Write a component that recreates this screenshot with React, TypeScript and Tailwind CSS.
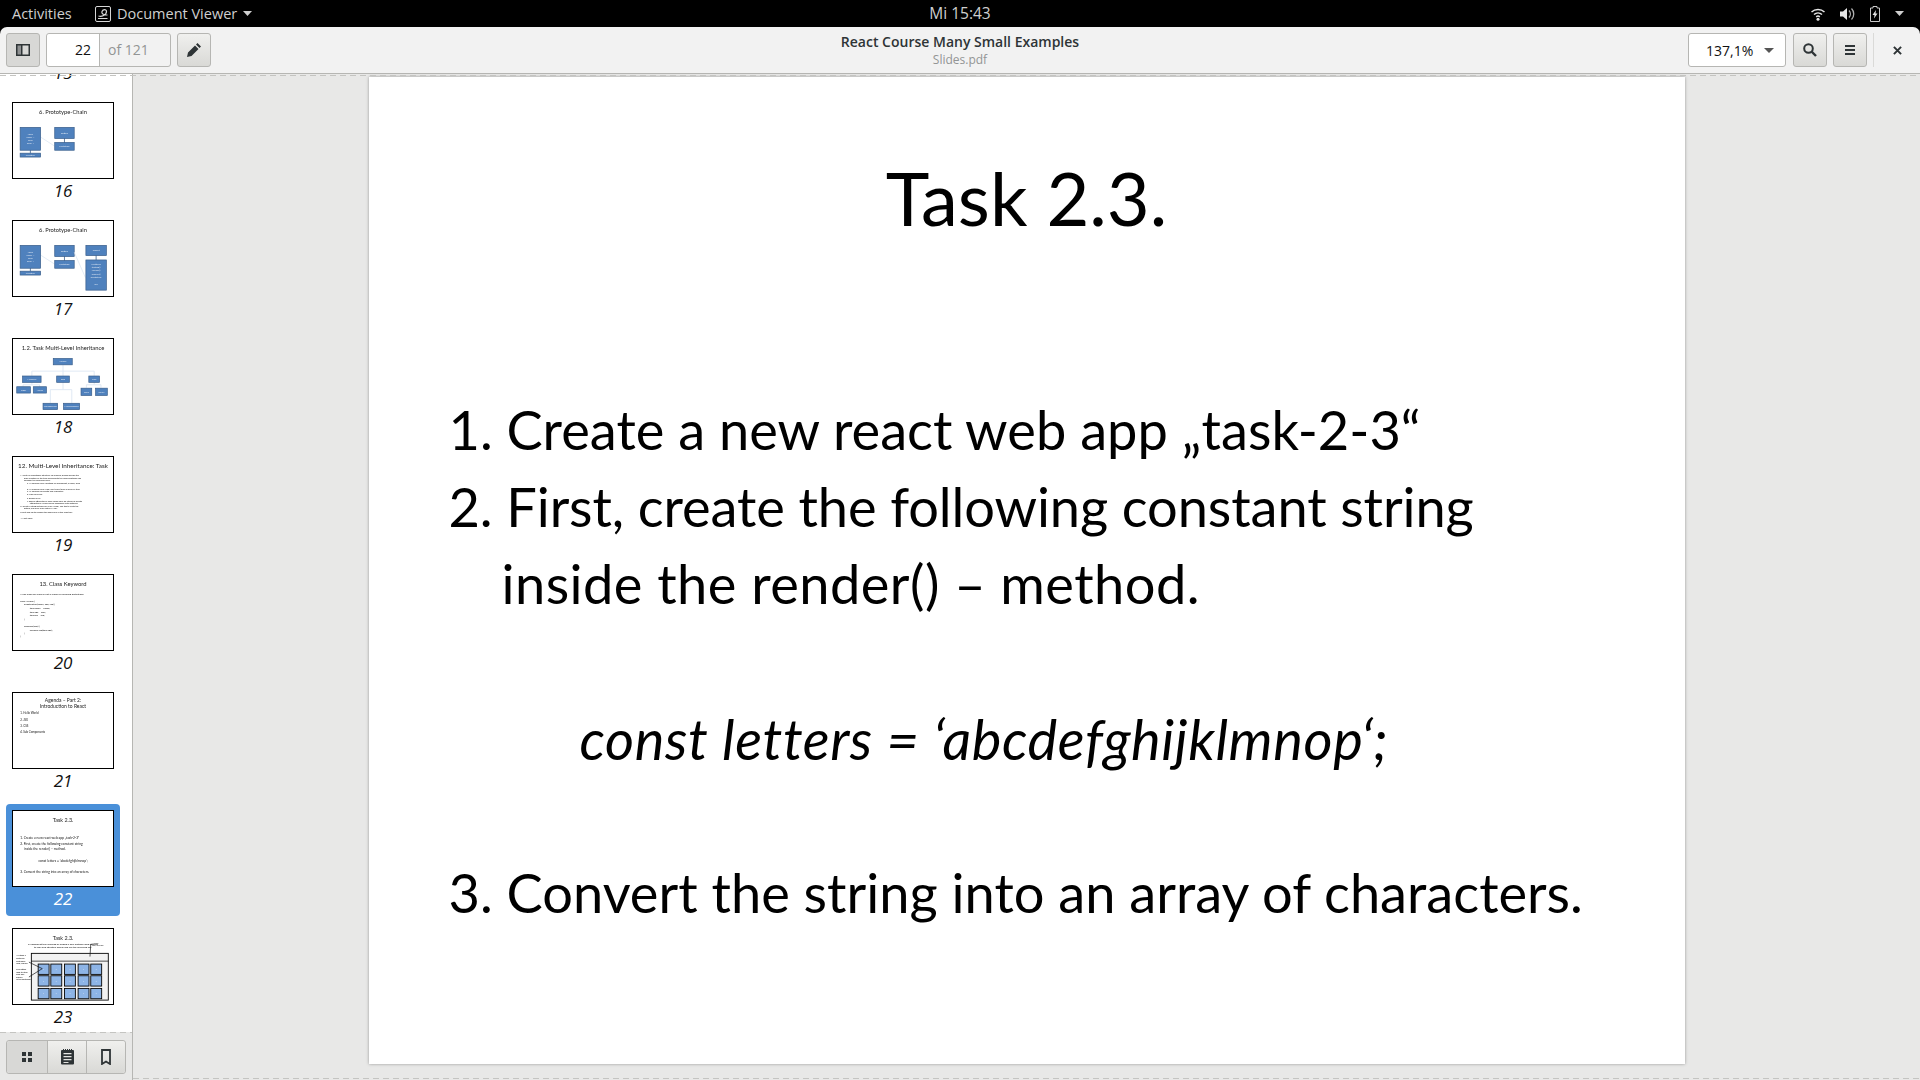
import type { ReactNode } from 'react'

const BOX = '#4f81bd'
const BOX_EDGE = '#385d8a'

type Rect = [number, number, number, number, string?]

function Boxes({ items }: { items: Rect[] }) {
  return (
    <>
      {items.map(([x, y, x2, y2, label], i) => (
        <g key={i}>
          <rect x={x} y={y} width={x2 - x} height={y2 - y} fill={BOX} stroke={BOX_EDGE} strokeWidth="0.7" />
          {label && (
            <text x={(x + x2) / 2} y={(y + y2) / 2 + 0.8} fontSize="2.4" fill="#dfe8f4" textAnchor="middle">
              {label}
            </text>
          )}
        </g>
      ))}
    </>
  )
}

function Line({ x, y, size = 2.6, anchor, children, color = '#111' }: { x: number; y: number; size?: number; anchor?: 'middle'; children: ReactNode; color?: string }) {
  return (
    <text x={x} y={y} fontSize={size} fill={color} textAnchor={anchor}>
      {children}
    </text>
  )
}

function Title({ y = 11.5, size = 5.9, children }: { y?: number; size?: number; children: ReactNode }) {
  return <Line x={51} y={y} size={size} anchor="middle" color="#222">{children}</Line>
}

function Chain({ extended }: { extended?: boolean }) {
  return (
    <>
      <Title>6. Prototype-Chain</Title>
      <path d="M28 35 L42 44" stroke="#dce6f2" strokeWidth="0.8" />
      <path d="M17.5 48 V52 M52.5 36 V41" stroke={BOX_EDGE} strokeWidth="0.8" />
      <Boxes items={[[7, 25, 28, 48.5], [7, 51.5, 28, 55.5, 'Function'], [42.5, 25, 62.5, 36.5, 'Button'], [42.5, 40.5, 62.5, 48.5, 'Prototype']]} />
      <text x="17.5" y="33" fontSize="2.2" fill="#dfe8f4" textAnchor="middle">Apple</text>
      <text x="17.5" y="36" fontSize="2.2" fill="#dfe8f4" textAnchor="middle">name: ...</text>
      <text x="17.5" y="39" fontSize="2.2" fill="#dfe8f4" textAnchor="middle">color</text>
      <text x="17.5" y="42" fontSize="2.2" fill="#dfe8f4" textAnchor="middle">price: 1</text>
      {extended && (
        <>
          <path d="M62.5 32 L74 58" stroke="#dce6f2" strokeWidth="0.8" />
          <path d="M85 35 V41" stroke={BOX_EDGE} strokeWidth="0.8" />
          <Boxes items={[[74.5, 25, 95.5, 35.5, 'Object'], [74.5, 40, 95.5, 71]]} />
          {['Prototype', 'toString()', 'valueOf()', 'hasOwn()', 'isPrototype', '', 'null'].map((t, i) => (
            <text key={i} x="85" y={45 + i * 3.4} fontSize="2.2" fill="#dfe8f4" textAnchor="middle">{t}</text>
          ))}
        </>
      )}
    </>
  )
}

function Tree() {
  return (
    <>
      <Title size={6}>1.2. Task Multi-Level Inheritance</Title>
      <path d="M51 26 V38 M19 38 V33 H83 V38 M19 44 V47 H10 V49 M19 47 H27 V49 M51 44 V52 H38 V66 M51 52 H60 V66 M83 44 V47 H75 V50 M83 47 H90 V50" stroke="#dce6f2" strokeWidth="0.9" fill="none" />
      <Boxes
        items={[
          [41, 20, 60.5, 26.5, 'Animal'],
          [9.5, 38, 28.5, 44.5, 'Mammal'],
          [44.5, 38, 57.5, 44.5, 'Bird'],
          [77.5, 38, 88.5, 44.5, 'Fish'],
          [3.5, 49, 17.5, 55.5, 'Tiger'],
          [20.5, 49, 34, 55.5, 'Horse'],
          [69.5, 50.5, 80.5, 58, 'Tuna'],
          [84.5, 50.5, 96.5, 58, 'Shark'],
          [30.5, 66, 45.5, 72.5, 'Woodpecker'],
          [51.5, 66, 68, 72.5, 'Hummingbird'],
        ]}
      />
    </>
  )
}

const TASK_LINES: [number, number, string][] = [
  [7, 20, '1.  Write an inheritance structure for animals, please include the'],
  [11, 22.3, 'base function of the tree according to the following tasks and'],
  [11, 24.7, 'consider the following rules:'],
  [14, 28.2, 'a.  All animals have a method for movement, a name, food'],
  [14, 33.7, 'b.  All animals have a age, sub-types (such as how far they'],
  [14, 36.4, 'c.  All animals can breath and reproduce'],
  [14, 39, 'd.  Fish can swim'],
  [14, 42.7, 'e.  Birds can fly'],
  [14, 46, 'f.   Special attributes of each animal shall be stored as private'],
  [17, 48.2, 'attributes in a class and be accessible with methods'],
  [7, 51.2, '2.  Create a string method for every "class", use this to write the'],
  [11, 53.5, 'details, and have each return a "log"'],
  [7, 58, '3.  Test and log to console the behaviour of the class tree -'],
  [7, 63.4, '4.  Next video'],
]

const CODE_LINES: [number, number, string][] = [
  [7, 20.4, '•   The class keyword is just a sugar for defining prototypes'],
  [7, 28, 'class Animal {'],
  [11, 31, 'constructor(name, age, job) {'],
  [17, 35, 'this.name = name;'],
  [17, 38.7, 'this.age = age;'],
  [17, 42.4, 'this.job = job;'],
  [11, 46, '}'],
  [11, 53.4, 'describe(age) {'],
  [17, 57, 'console.log(this.age);'],
  [11, 60.7, '}'],
  [7, 64, '}'],
]

function Grid() {
  const xs = [25.5, 38.5, 52.5, 66.5, 79.5]
  const ys = [36, 48, 61]
  return (
    <>
      <Title size={5.6}>Task 2.3.</Title>
      <Line x={51} y={16.5} size={2.5} anchor="middle" color="#000">3. Implement the following by adding a new method using Flexbox</Line>
      <Line x={51} y={19.2} size={2.5} anchor="middle" color="#000">to look and structure similar and use the following key:</Line>
      <rect x="18.5" y="25" width="79" height="48" fill="#f2f2f2" stroke="#000" strokeWidth="0.9" />
      <path d="M18.5 33 H97.5" stroke="#000" strokeWidth="0.7" />
      {ys.map(y =>
        xs.map(x => (
          <g key={`${x}-${y}`}>
            <rect x={x} y={y} width="11.2" height="10.6" fill="#8db4e6" stroke="#000" strokeWidth="0.9" />
            <text x={x + 5.6} y={y + 6} fontSize="2" fill="#dfe8f4" textAnchor="middle">a</text>
          </g>
        )),
      )}
      <path d="M16 34 L29.7 40.7 L16 49.3 M78.7 28.3 L79.5 15.7 H81" stroke="#111" strokeWidth="0.7" fill="none" />
      <Line x={81} y={15.5} size={2}>Header</Line>
      <Line x={81} y={17.6} size={2}>title, one row</Line>
      {['All items a', 'centered', 'container:', 'Grid, Square'].map((t, i) => (
        <Line key={t} x={3} y={28 + i * 2.7} size={2.2} color="#000">{t}</Line>
      ))}
      {['The letters', 'map to item', 'blue box', 'shown', 'in the container'].map((t, i) => (
        <Line key={t} x={3} y={42 + i * 2.7} size={2.2} color="#000">{t}</Line>
      ))}
    </>
  )
}

const THUMBS: { page: number; body?: ReactNode; active?: boolean }[] = [
  { page: 15 },
  { page: 16, body: <Chain /> },
  { page: 17, body: <Chain extended /> },
  { page: 18, body: <Tree /> },
  {
    page: 19,
    body: (
      <>
        <Title y={11.5} size={6.5}>12. Multi-Level Inheritance: Task</Title>
        {TASK_LINES.map(([x, y, t]) => <Line key={y} x={x} y={y} size={2.2}>{t}</Line>)}
      </>
    ),
  },
  {
    page: 20,
    body: (
      <>
        <Title y={11.5} size={6}>13. Class Keyword</Title>
        {CODE_LINES.map(([x, y, t]) => <Line key={y} x={x} y={y} size={2.6}>{t}</Line>)}
      </>
    ),
  },
  {
    page: 21,
    body: (
      <>
        <Title y={8.8} size={5.1}>Agenda – Part 2:</Title>
        <Title y={15} size={5.1}>Introduction to React</Title>
        {['1.   Hello World', '2.   JSX', '3.   CSS', '4.   Sub Components'].map((t, i) => (
          <Line key={t} x={7} y={22 + i * 6.3} size={3}>{t}</Line>
        ))}
      </>
    ),
  },
  {
    page: 22,
    active: true,
    body: (
      <>
        <Title y={11.5} size={5.6}>Task 2.3.</Title>
        <Line x={7} y={28.5} size={3.4}>1. Create a new react web app „task-2-3“</Line>
        <Line x={7} y={34.8} size={3.4}>2. First, create the following constant string</Line>
        <Line x={11} y={40.2} size={3.4}>inside the render() – method.</Line>
        <Line x={51} y={52.4} size={3.4} anchor="middle">const letters = ‘abcdefghijklmnop‘;</Line>
        <Line x={7} y={63.4} size={3.4}>3. Convert the string into an array of characters.</Line>
      </>
    ),
  },
  { page: 23, body: <Grid /> },
]

function Thumb({ page, body, active }: { page: number; body?: ReactNode; active?: boolean }) {
  return (
    <div className={`mx-[6px] h-[112px] w-[114px] shrink-0 rounded-[4px] pt-[6px] ${active ? 'bg-[#4a90d9]' : ''}`}>
      <svg viewBox="0 0 102 77" className="mx-auto block h-[77px] w-[102px] border border-black bg-white font-['Lato',sans-serif]">
        <g className="blur-[0.3px]">{body}</g>
      </svg>
      <div className={`-mt-[1px] text-center text-[17px] italic leading-[26px] ${active ? 'text-white' : 'text-[#111]'}`}>{page}</div>
    </div>
  )
}

function Dashes({ className }: { className: string }) {
  return <div className={`absolute h-px bg-[repeating-linear-gradient(90deg,#c4c4c1_0_6px,transparent_6px_10px)] ${className}`} />
}

function ToolButton({ children, pressed, className = '' }: { children: ReactNode; pressed?: boolean; className?: string }) {
  return (
    <button className={`flex h-[34px] w-[34px] items-center justify-center rounded-[3px] border border-[#b6b6b3] ${pressed ? 'bg-[#d8d8d6]' : 'bg-gradient-to-b from-[#f0f0ee] to-[#d9d9d6]'} ${className}`}>
      {children}
    </button>
  )
}

function TopBar() {
  return (
    <div className="relative flex h-[27px] shrink-0 items-center bg-black text-[14.5px] text-[#cfcfcf]">
      <span className="ml-[12px] w-[83px]">Activities</span>
      <svg viewBox="0 0 16 16" className="h-[16px] w-[16px]" fill="none" stroke="#d6d6d6">
        <rect x="0.5" y="0.5" width="15" height="15" rx="1.5" />
        <path d="M3.5 10c3 1 8-1 8-4.5C11.500 3 8 3 7 5.500c-.8 2 1 3.500 5.500 3.500M3 12.500h9.500" strokeWidth="1.2" />
      </svg>
      <span className="ml-[6px]">Document Viewer</span>
      <svg viewBox="0 0 10 5" className="ml-[6px] h-[5px] w-[10px]" fill="#cfcfcf"><path d="M0 0h9L4.500 5z" /></svg>
      <span className="absolute left-1/2 -translate-x-1/2 text-[15.5px] font-medium">Mi 15:43</span>
      <div className="ml-auto flex items-center gap-[14px] pr-[15px]">
        <svg viewBox="0 0 14 14" className="h-[14px] w-[14px]" fill="none" stroke="#e6e6e6" strokeWidth="1.500">
          <path d="M.5 5c3.600-3.400 9.400-3.400 13 0M3 7.500c2.300-2 5.700-2 8 0M5.200 9.800c1-.8 2.600-.8 3.600 0" />
          <circle cx="7" cy="12.300" r="1.500" fill="#e6e6e6" stroke="none" />
        </svg>
        <svg viewBox="0 0 16 16" className="h-[16px] w-[16px]" fill="#e6e6e6">
          <path d="M1 5.500h3L8 2v12L4 10.500H1z" />
          <path d="M10 4.500c1.800 2 1.800 5 0 7M12.500 2.500c3 3 3 8 0 11" fill="none" stroke="#b0b0b0" strokeWidth="1.300" />
        </svg>
        <svg viewBox="0 0 12 16" className="h-[16px] w-[12px]">
          <path d="M4 .5h4v1.500h2.500v13.500h-9V2H4z" fill="none" stroke="#c8c8c8" />
          <path d="M7 4 3.500 9h2L5 12.500 8.500 7.500h-2z" fill="#e6e6e6" />
        </svg>
        <svg viewBox="0 0 10 5" className="h-[5px] w-[10px]" fill="#cfcfcf"><path d="M0 0h9L4.500 5z" /></svg>
      </div>
    </div>
  )
}

function HeaderBar() {
  return (
    <div className="bg-black">
      <header className="relative flex h-[47px] items-center rounded-t-[7px] border-b border-[#b6b6b3] bg-[#f2f2f2] pl-[6px] pr-[18px] text-[#2e3436]">
        <ToolButton pressed>
          <svg viewBox="0 0 14 12" className="h-[12px] w-[14px]">
            <path d="M1 1h5v10H1z" fill="#8f9192" />
            <path fillRule="evenodd" d="M0 0h14v12H0zM1.500 1.500v9h3.500v-9zM6.500 1.500v9h6v-9z" fill="#2e3436" />
          </svg>
        </ToolButton>
        <div className="ml-[6px] flex h-[34px] w-[125px] rounded-[3px] border border-[#b6b6b3] text-[14px]">
          <div className="w-[53px] rounded-l-[3px] border-r border-[#b6b6b3] bg-white pr-[8px] text-right leading-[32px] text-[#111]">22</div>
          <div className="pl-[8px] leading-[32px] text-[#929595]">of 121</div>
        </div>
        <ToolButton className="ml-[6px]">
          <svg viewBox="0 0 14 14" className="h-[14px] w-[14px]" fill="#2e3436">
            <path d="M0 14l1-4.500 7-7 3.500 3.500-7 7zM9 1.500 10.500 0 14 3.500 12.500 5z" />
          </svg>
        </ToolButton>
        <div className="absolute left-1/2 flex -translate-x-1/2 flex-col items-center">
          <span className="text-[14px] font-semibold leading-[18px]">React Course Many Small Examples</span>
          <span className="mt-[1px] text-[12px] leading-[16px] text-[#929595]">Slides.pdf</span>
        </div>
        <div className="ml-auto flex items-center">
          <div className="flex h-[34px] w-[98px] items-center rounded-[3px] border border-[#b6b6b3] bg-white pl-[17px] text-[14px] text-[#111]">
            137,1%
            <svg viewBox="0 0 10 5" className="ml-[11px] h-[5px] w-[10px]" fill="#555"><path d="M0 0h10L5 5z" /></svg>
          </div>
          <ToolButton className="ml-[7px]">
            <svg viewBox="0 0 14 14" className="h-[14px] w-[14px]" fill="none" stroke="#2e3436" strokeWidth="2">
              <circle cx="5.500" cy="5.500" r="4.300" />
              <path d="M8.500 8.500 13 13" strokeWidth="2.400" />
            </svg>
          </ToolButton>
          <ToolButton className="ml-[6px]">
            <svg viewBox="0 0 12 12" className="h-[12px] w-[12px]" fill="#2e3436">
              <path d="M1 1h10v2H1zM1 5h10v2H1zM1 9h10v2H1z" />
            </svg>
          </ToolButton>
          <div className="ml-[6px] h-[34px] w-px bg-[#dadad8]" />
          <svg viewBox="0 0 10 10" className="ml-[19px] h-[9px] w-[9px]" fill="none" stroke="#2e3436" strokeWidth="2.200">
            <path d="M1 1l8 8M9 1l-8 8" />
          </svg>
        </div>
      </header>
    </div>
  )
}

function Sidebar() {
  return (
    <aside className="flex w-[133px] shrink-0 flex-col border-r border-[#b6b6b3]">
      <div className="flex-1 overflow-hidden bg-white">
        <div className="-mt-[96px] flex flex-col gap-[6px]">
          {THUMBS.map(t => <Thumb key={t.page} {...t} />)}
        </div>
      </div>
      <div className="relative flex h-[48px] shrink-0 items-start bg-[#e8e8e7] pl-[6px] pt-[8px]">
        <Dashes className="left-0 right-0 top-0" />
        <div className="flex h-[34px] w-[120px] rounded-[3px] border border-[#b6b6b3]">
          <div className="flex w-[40px] items-center justify-center rounded-l-[3px] bg-[#d8d8d6]">
            <svg viewBox="0 0 10 10" className="h-[10px] w-[10px]" fill="#2e3436">
              <path d="M0 0h4v4H0zM6 0h4v4H6zM0 6h4v4H0zM6 6h4v4H6z" />
            </svg>
          </div>
          <div className="flex w-[40px] items-center justify-center border-x border-[#b6b6b3] bg-gradient-to-b from-[#f0f0ee] to-[#d9d9d6]">
            <svg viewBox="0 0 13 16" className="h-[16px] w-[13px]" fill="#2e3436">
              <path fillRule="evenodd" d="M1 1h1V0h1v1h1V0h1v1h1V0h1v1h1V0h1v1h1V0h1v1h1a1 1 0 0 1 1 1v12.500a1 1 0 0 1-1 1H1a1 1 0 0 1-1-1V2a1 1 0 0 1 1-1zM2.500 4v1.200h8V4zm0 3v1.200h8V7zm0 3v1.200h8V10zm0 3v1h5v-1z" />
            </svg>
          </div>
          <div className="flex flex-1 items-center justify-center rounded-r-[3px] bg-gradient-to-b from-[#f0f0ee] to-[#d9d9d6]">
            <svg viewBox="0 0 10 16" className="h-[16px] w-[10px]" fill="none" stroke="#2e3436" strokeWidth="1.800">
              <path d="M1 1h8v14L5 12.500 1 15z" />
            </svg>
          </div>
        </div>
      </div>
    </aside>
  )
}

function Slide() {
  return (
    <div className="h-[987px] w-[1316px] bg-white pl-[80px] font-['Lato',sans-serif] text-[54.2px] leading-[77px] text-black shadow-[0_0_3px_rgba(0,0,0,0.35)]">
      <h1 className="pt-[76px] pr-[80px] text-center text-[74px] leading-[90px]">Task 2.3.</h1>
      <div className="pt-[148px]">
        <p>1. Create a new react web app „task-2-3“</p>
        <p className="tracking-[-0.1px]">2. First, create the following constant string</p>
        <p className="pl-[53px] tracking-[0.45px]">inside the render() – method.</p>
        <p className="pt-[78px] pl-[131px] text-[56px] italic tracking-[0.6px]">const letters = ‘abcdefghijklmnop‘;</p>
        <p className="pt-[77px]">3. Convert the string into an array of characters.</p>
      </div>
    </div>
  )
}

export default function App() {
  return (
    <div className="flex h-[1080px] w-[1920px] flex-col overflow-hidden bg-[#e8e8e7] font-['Open_Sans',sans-serif]">
      <TopBar />
      <HeaderBar />
      <div className="relative flex min-h-0 flex-1">
        <Sidebar />
        <main className="flex flex-1 justify-center pt-[3px]">
          <Slide />
        </main>
        <Dashes className="left-0 right-0 top-[1px]" />
        <Dashes className="bottom-[1px] left-[133px] right-0" />
      </div>
    </div>
  )
}
